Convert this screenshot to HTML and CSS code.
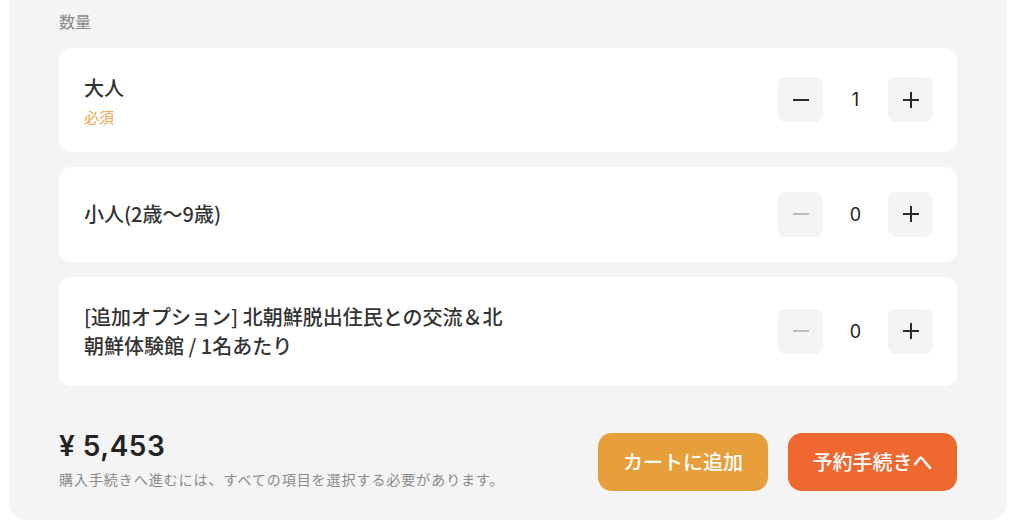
FILE: index.html
```html
<!DOCTYPE html>
<html lang="ja">
<head>
<meta charset="utf-8">
<title>数量</title>
<link rel="stylesheet" href="styles.css">
</head>
<body>
<div class="panel">
  <div class="section-label">数量</div>
  <div class="cards">
    <div class="card">
      <div class="label">
        <div class="title">大人</div>
        <div class="required">必須</div>
      </div>
      <div class="stepper">
        <button class="step"><svg viewBox="0 0 18 18" width="18" height="18"><path d="M1 9h16" /></svg></button>
        <span class="count">1</span>
        <button class="step"><svg viewBox="0 0 18 18" width="18" height="18"><path d="M1 9h16M9 1v16" /></svg></button>
      </div>
    </div>
    <div class="card">
      <div class="label">
        <div class="title">小人(2歳〜9歳)</div>
      </div>
      <div class="stepper">
        <button class="step disabled"><svg viewBox="0 0 18 18" width="18" height="18"><path d="M1 9h16" /></svg></button>
        <span class="count">0</span>
        <button class="step"><svg viewBox="0 0 18 18" width="18" height="18"><path d="M1 9h16M9 1v16" /></svg></button>
      </div>
    </div>
    <div class="card">
      <div class="label">
        <div class="title">[追加オプション] 北朝鮮脱出住民との交流＆北朝鮮体験館 / 1名あたり</div>
      </div>
      <div class="stepper">
        <button class="step disabled"><svg viewBox="0 0 18 18" width="18" height="18"><path d="M1 9h16" /></svg></button>
        <span class="count">0</span>
        <button class="step"><svg viewBox="0 0 18 18" width="18" height="18"><path d="M1 9h16M9 1v16" /></svg></button>
      </div>
    </div>
  </div>
  <div class="footer">
    <div class="summary">
      <div class="price">¥ 5,453</div>
      <div class="note">購入手続きへ進むには、すべての項目を選択する必要があります。</div>
    </div>
    <div class="actions">
      <button class="btn btn-cart">カートに追加</button>
      <button class="btn btn-book">予約手続きへ</button>
    </div>
  </div>
</div>
</body>
</html>
```
FILE: styles.css
```css
* { box-sizing: border-box; }
html, body {
  margin: 0;
  padding: 0;
  background: #ffffff;
}
body {
  font-family: "Noto Sans CJK JP", "Noto Sans", sans-serif;
  color: #333333;
}
.panel {
  margin-left: 9px;
  width: 998px;
  background: #f4f4f4;
  border-radius: 0 0 16px 16px;
  padding: 8px 50px 29px 50px;
}
.section-label {
  font-size: 16px;
  line-height: 26px;
  color: #8a8a8a;
  margin-bottom: 14px;
}
.cards {
  display: flex;
  flex-direction: column;
  gap: 15px;
}
.card {
  background: #ffffff;
  border-radius: 12px;
  padding: 25px 24px 25px 25px;
  display: flex;
  align-items: center;
  justify-content: space-between;
}
.label {
  max-width: 432px;
}
.title {
  font-size: 20px;
  line-height: 29.5px;
  font-weight: 500;
  color: #333333;
}
.required {
  font-size: 15px;
  line-height: 20px;
  margin-top: 4px;
  color: #f0a84a;
}
.stepper {
  display: flex;
  align-items: center;
}
.step {
  width: 45px;
  height: 45px;
  border: none;
  border-radius: 8px;
  background: #f4f4f4;
  display: flex;
  align-items: center;
  justify-content: center;
  padding: 0;
}
.step svg {
  stroke: #2a2a2a;
  stroke-width: 2;
  fill: none;
}
.step.disabled svg {
  stroke: #bdbdbd;
}
.count {
  width: 65px;
  text-align: center;
  font-family: Inter, "Noto Sans", sans-serif;
  font-size: 18px;
  color: #222222;
}
.footer {
  display: flex;
  justify-content: space-between;
  align-items: flex-start;
  margin-top: 42px;
}
.price {
  font-family: Inter, "Noto Sans", sans-serif;
  font-size: 28px;
  font-weight: 600;
  line-height: 36px;
  letter-spacing: 0.5px;
  color: #222222;
}
.note {
  margin-top: 5px;
  font-size: 14px;
  line-height: 20px;
  letter-spacing: 0.95px;
  color: #8a8a8a;
}
.actions {
  display: flex;
  gap: 20px;
  margin-top: 5px;
}
.btn {
  width: 170px;
  height: 58px;
  border: none;
  border-radius: 14px;
  color: #ffffff;
  font-family: "Noto Sans CJK JP", sans-serif;
  font-size: 20px;
  font-weight: 500;
  padding: 0;
}
.btn-cart { background: #e69f3a; }
.btn-book { background: #ef6830; width: 169px; }
```
